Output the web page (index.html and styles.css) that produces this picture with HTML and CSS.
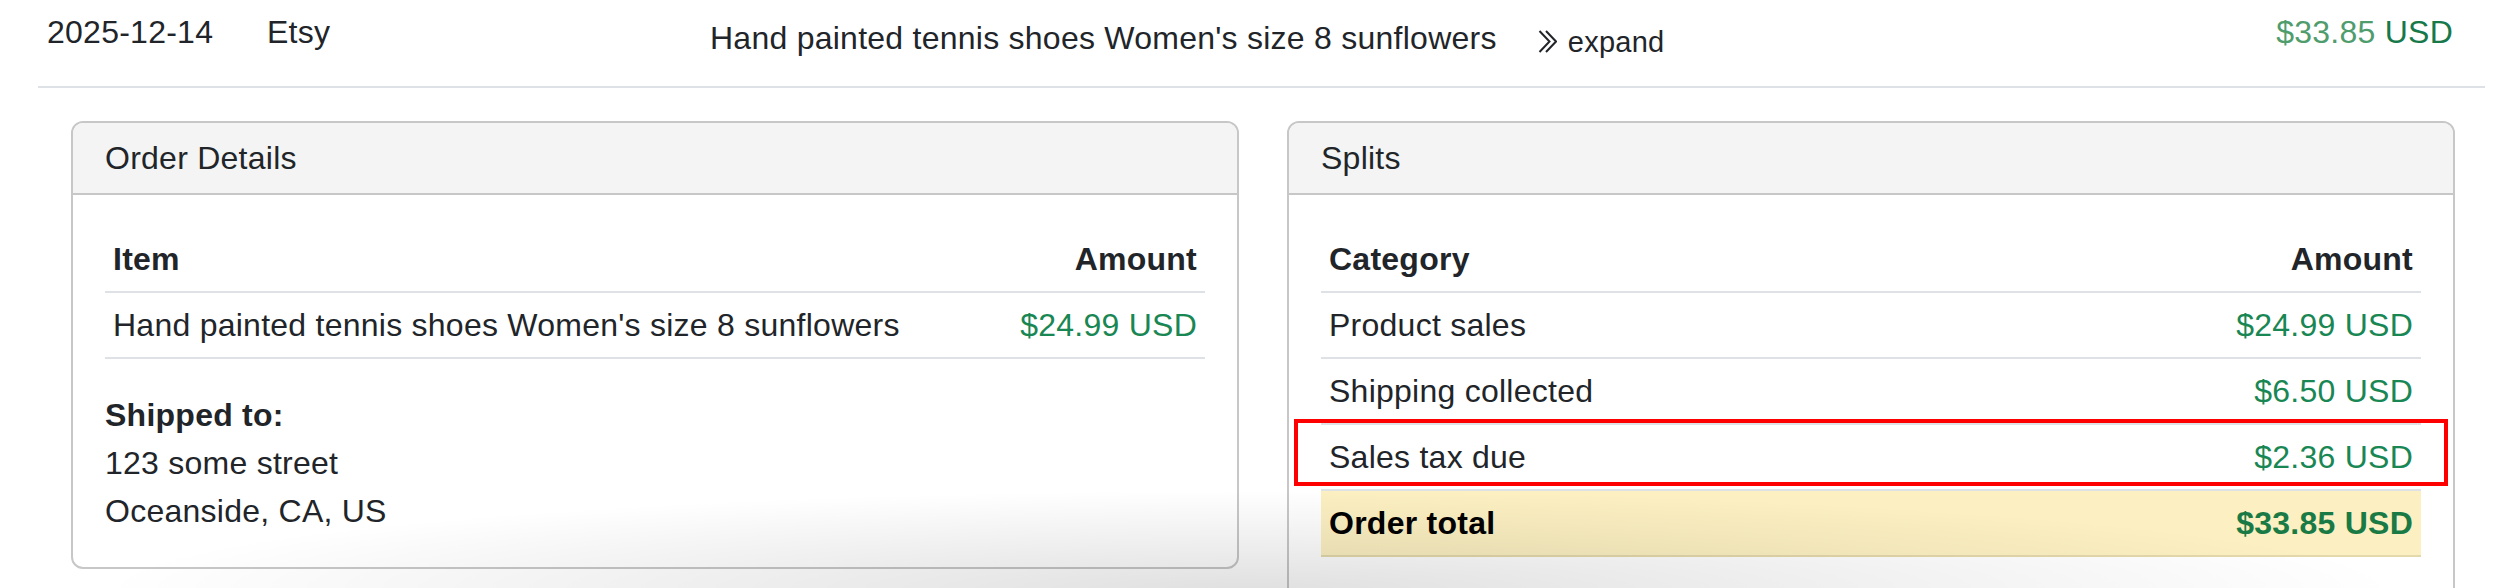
FILE: index.html
```html
<!DOCTYPE html>
<html lang="en">
<head>
<meta charset="utf-8">
<title>Transaction</title>
<link rel="stylesheet" href="styles.css">
</head>
<body>
<div class="page">
  <div class="txn-row">
    <div class="txn-date">2025-12-14</div>
    <div class="txn-source">Etsy</div>
    <div class="txn-desc">
      <span class="desc-text">Hand painted tennis shoes Women's size 8 sunflowers</span>
      <button class="expand-btn" type="button"><svg class="chev" width="19" height="23" viewBox="0 0 19 23" aria-hidden="true"><path d="M1.5 1 L11.5 11.5 L1.5 22 M8 1 L18 11.5 L8 22" fill="none" stroke="#212529" stroke-width="2"/></svg><span class="expand-label">expand</span></button>
    </div>
    <div class="txn-amount"><span class="amt-num">$33.85</span> <span class="amt-cur">USD</span></div>
  </div>

  <div class="panels">
    <section class="card">
      <header class="card-header">Order Details</header>
      <div class="card-body">
        <table class="tbl">
          <thead>
            <tr><th>Item</th><th class="num">Amount</th></tr>
          </thead>
          <tbody>
            <tr><td>Hand painted tennis shoes Women's size 8 sunflowers</td><td class="num money">$24.99 USD</td></tr>
          </tbody>
        </table>
        <div class="ship">
          <div class="ship-label">Shipped to:</div>
          <div>123 some street</div>
          <div>Oceanside, CA, US</div>
        </div>
      </div>
    </section>

    <section class="card">
      <header class="card-header">Splits</header>
      <div class="card-body">
        <div class="tbl-wrap">
          <table class="tbl">
            <thead>
              <tr><th>Category</th><th class="num">Amount</th></tr>
            </thead>
            <tbody>
              <tr><td>Product sales</td><td class="num money">$24.99 USD</td></tr>
              <tr><td>Shipping collected</td><td class="num money">$6.50 USD</td></tr>
              <tr><td>Sales tax due</td><td class="num money">$2.36 USD</td></tr>
              <tr class="total-row"><td>Order total</td><td class="num money">$33.85 USD</td></tr>
            </tbody>
          </table>
          <div class="highlight-box"></div>
        </div>
      </div>
    </section>
  </div>
</div>
<div class="bottom-shadow"></div>
</body>
</html>
```

FILE: styles.css
```css
html {
  overflow: hidden;
}

body {
  margin: 0;
  position: relative;
  background: #ffffff;
  color: #212529;
  font-family: "Liberation Sans", Arial, sans-serif;
  font-size: 32px;
  line-height: 48px;
  letter-spacing: 0.25px;
}

.page {
  margin-left: 38px;
  width: 2447px;
}

/* top transaction row */
.txn-row {
  box-sizing: border-box;
  height: 88px;
  display: flex;
  align-items: flex-start;
  padding: 8px 32px 0 9px;
  border-bottom: 2px solid #dee2e6;
}

.txn-date {
  width: 220px;
  flex: none;
}

.txn-source {
  width: 443px;
  flex: none;
}

.txn-desc {
  flex: 1;
  padding-top: 6px;
  white-space: nowrap;
}

.expand-btn {
  margin-left: 32px;
  padding: 0;
  border: 0;
  background: none;
  color: #212529;
  font-family: inherit;
  font-size: 29px;
  letter-spacing: 0.25px;
  line-height: 48px;
  vertical-align: -3px;
  cursor: pointer;
}

.chev {
  vertical-align: -1px;
  margin-right: 11px;
}

.txn-amount {
  flex: none;
  white-space: nowrap;
}

.amt-num {
  color: #4f9c6d;
}

.amt-cur {
  color: #17784a;
}

/* panels */
.panels {
  margin-top: 33px;
  padding: 0 30px 0 33px;
  display: grid;
  grid-template-columns: 1fr 1fr;
  column-gap: 48px;
  align-items: start;
}

.card {
  border: 2px solid #c7c7c7;
  border-radius: 12px;
  background: #ffffff;
  overflow: hidden;
}

.card-header {
  background: #f4f4f4;
  padding: 11px 32px;
  border-bottom: 2px solid #c7c7c7;
}

.card-body {
  padding: 32px;
}

.tbl-wrap {
  position: relative;
  margin-bottom: 32px;
}

.tbl {
  width: 100%;
  border-collapse: collapse;
  margin-bottom: 32px;
}

.tbl-wrap .tbl {
  margin-bottom: 0;
}

.tbl th,
.tbl td {
  padding: 8px;
  border-bottom: 2px solid #dee2e6;
  text-align: left;
  vertical-align: top;
}

.tbl th {
  font-weight: 700;
}

.tbl .num {
  text-align: right;
  white-space: nowrap;
}

.money {
  color: #198754;
}

.total-row td {
  background: #fcf0c2;
  border-bottom-color: #e4d9ab;
  font-weight: 700;
  color: #000000;
}

.total-row td.money {
  color: #1a7a45;
}

.ship-label {
  font-weight: 700;
}

/* annotation rectangle around the sales-tax row */
.highlight-box {
  position: absolute;
  left: -27px;
  right: -27px;
  top: 192px;
  height: 67px;
  box-sizing: border-box;
  border: 4px solid #ff0000;
  pointer-events: none;
}

/* soft shadow cast over the bottom of the page */
.bottom-shadow {
  position: absolute;
  left: 100px;
  top: 490px;
  width: 2300px;
  height: 200px;
  background: radial-gradient(ellipse 50% 50% at 50% 50%, rgba(0, 0, 0, 0.12), rgba(0, 0, 0, 0) 100%);
  pointer-events: none;
}
```
